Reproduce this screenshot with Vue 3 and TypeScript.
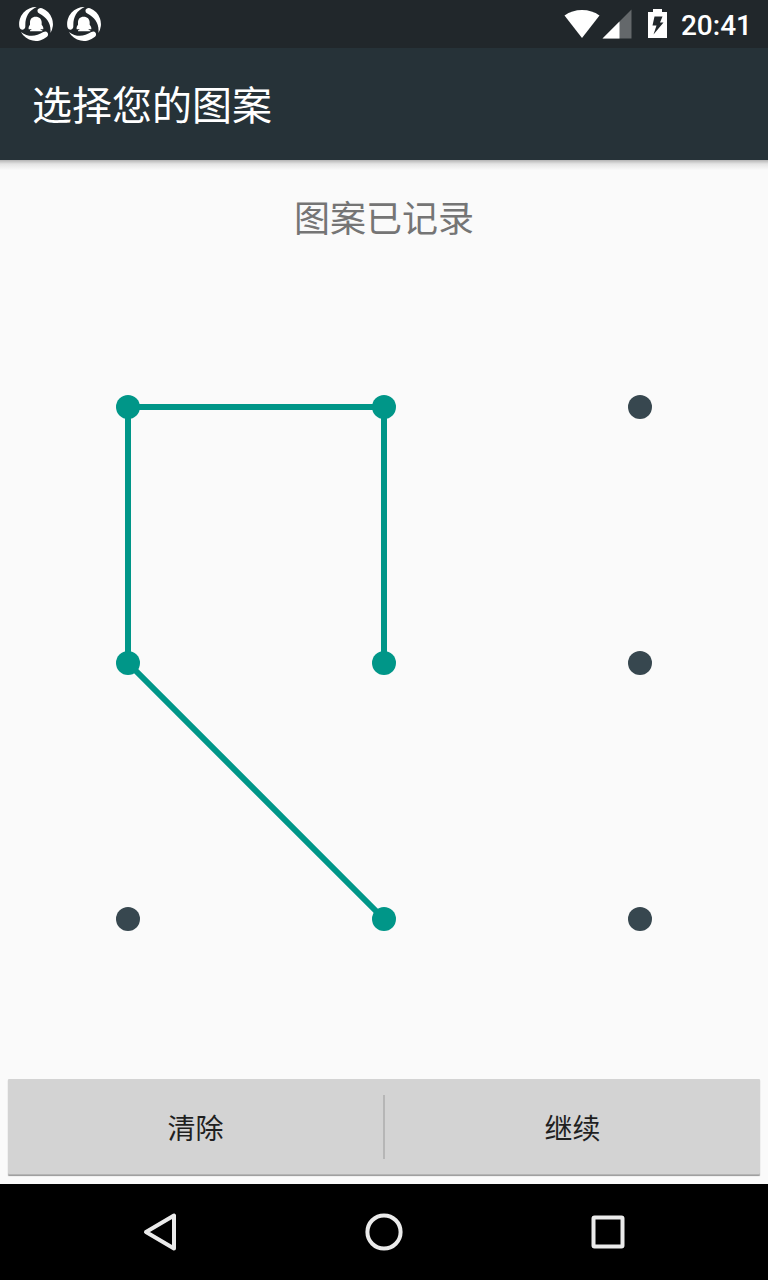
<script setup lang="ts">
interface Dot {
  x: number
  y: number
}

const step = 256
const dots: Dot[] = Array.from({ length: 9 }, (_, i) => ({
  x: 128 + (i % 3) * step,
  y: 128 + Math.floor(i / 3) * step,
}))

const recorded: number[] = [4, 1, 0, 3, 7]
const trail = recorded.map((i) => `${dots[i].x},${dots[i].y}`).join(' ')
const notifications: string[] = ['n1', 'n2']
const swooshAngles: number[] = [0, 120, 240]
</script>

<template>
  <div class="screen">
    <div class="status-bar">
      <div class="notifications">
        <svg v-for="n in notifications" :key="n" class="notification" viewBox="54 18 108 108" aria-hidden="true">
          <path
            v-for="angle in swooshAngles"
            :key="angle"
            :transform="`rotate(${angle} 108 72)`"
            d="M110 21A51 51 0 0 0 58 80Q60 89 68 89Q76 88 76 79C75 52 85 32 110 21Z"
          />
          <path d="M107 50C96 50 90 57 90 67V74C87 78 85 82 86 88H93L95 90L90 91V94H127V91L121 90L123 88H130C131 82 128 78 125 74V67C125 57 118 50 107 50Z" />
        </svg>
      </div>
      <div class="system">
        <svg class="wifi" viewBox="0 0 36 30" aria-hidden="true">
          <path d="M0.5 6.5Q8 1 18 1T35.5 6.5L18 29Z" />
        </svg>
        <svg class="signal" viewBox="0 0 30 30" aria-hidden="true">
          <path class="faint" d="M0.5 29.5L29.5 0.5V29.5Z" />
          <path d="M0.5 29.5L17.5 12.5V29.5Z" />
        </svg>
        <svg class="battery" viewBox="0 0 19 30" aria-hidden="true">
          <path d="M5 0H14V3H19V29H0V3H5Z" />
          <path class="bolt" d="M6.5 7.5H14.5L12 13.5H15.5L5.5 25.5L8.5 16.5H4.5Z" />
        </svg>
        <time class="clock">20:41</time>
      </div>
    </div>

    <header class="toolbar">
      <h1>选择您的图案</h1>
    </header>

    <main class="content">
      <p class="message">图案已记录</p>
      <svg class="pattern" viewBox="0 0 768 768" role="img" aria-label="图案">
        <polyline class="trail" :points="trail" />
        <circle
          v-for="(dot, i) in dots"
          :key="i"
          :class="['dot', { active: recorded.includes(i) }]"
          :cx="dot.x"
          :cy="dot.y"
          r="12"
        />
      </svg>
      <div class="actions">
        <button type="button">清除</button>
        <span class="divider"></span>
        <button type="button">继续</button>
      </div>
    </main>

    <nav class="nav-bar">
      <button type="button" aria-label="返回">
        <svg viewBox="0 0 48 48" aria-hidden="true"><path d="M38 7.5V40.5L10 24Z" /></svg>
      </button>
      <button type="button" aria-label="主屏幕">
        <svg viewBox="0 0 48 48" aria-hidden="true"><circle cx="24" cy="24" r="16.6" /></svg>
      </button>
      <button type="button" aria-label="概览">
        <svg viewBox="0 0 48 48" aria-hidden="true"><rect x="9.5" y="9.5" width="29" height="29" rx="1" /></svg>
      </button>
    </nav>
  </div>
</template>

<style>
body {
  margin: 0;
}
</style>

<style scoped>
.screen {
  display: flex;
  flex-direction: column;
  min-height: 100vh;
  background: #fafafa;
  font-family: Roboto, "Noto Sans CJK SC", sans-serif;
}

.status-bar {
  display: flex;
  justify-content: space-between;
  align-items: center;
  height: 48px;
  padding: 0 16px 0 18px;
  background: #21272b;
}

.status-bar svg {
  display: block;
  fill: #fff;
}

.notifications {
  display: flex;
  gap: 12px;
}

.notification {
  width: 36px;
  height: 36px;
}

.system {
  display: flex;
  align-items: center;
}

.wifi {
  width: 36px;
  height: 30px;
}

.signal {
  width: 30px;
  height: 30px;
  margin: 0 16px 0 2px;
}

.status-bar .faint {
  fill: #64686b;
}

.battery {
  width: 19px;
  height: 30px;
  margin-right: 14px;
}

.status-bar .bolt {
  fill: #21272b;
}

.clock {
  padding-top: 4px;
  color: #fff;
  font-size: 28px;
  font-weight: 500;
  line-height: 44px;
}

.toolbar {
  padding: 6px 32px 0;
  background: #263238;
}

.toolbar h1 {
  margin: 0;
  color: #fff;
  font-size: 40px;
  font-weight: 400;
  line-height: 106px;
}

.content {
  display: flex;
  flex: 1;
  flex-direction: column;
  background: linear-gradient(#b4b4b4, #e4e4e4 4px, #fafafa 10px);
}

.message {
  margin: 33px 16px 31px;
  color: #757575;
  font-size: 36px;
  line-height: 55px;
  text-align: center;
}

.pattern {
  display: block;
  flex: 1;
  width: 100%;
}

.trail {
  fill: none;
  stroke: #009688;
  stroke-width: 6;
  stroke-linecap: round;
  stroke-linejoin: round;
}

.dot {
  fill: #37474f;
}

.dot.active {
  fill: #009688;
}

.actions {
  display: flex;
  align-items: center;
  margin: 32px 8px 9px;
  border-radius: 1px;
  background: #d3d3d3;
  box-shadow: inset 0 -1px #b4b4b4, 0 1px 1px rgba(0, 0, 0, 0.4);
}

.actions button {
  flex: 1;
  height: 96px;
  padding: 0;
  border: 0;
  background: none;
  color: #1f1f1f;
  font: inherit;
  font-size: 28px;
}

.divider {
  width: 2px;
  height: 64px;
  background: #b6b6b6;
}

.nav-bar {
  display: flex;
  justify-content: center;
  height: 96px;
  background: #000;
}

.nav-bar button {
  display: flex;
  flex: 0 1 224px;
  align-items: center;
  justify-content: center;
  padding: 0;
  border: 0;
  background: none;
}

.nav-bar svg {
  width: 48px;
  height: 48px;
  fill: none;
  stroke: #ebebeb;
  stroke-width: 4;
  stroke-linejoin: round;
}
</style>
